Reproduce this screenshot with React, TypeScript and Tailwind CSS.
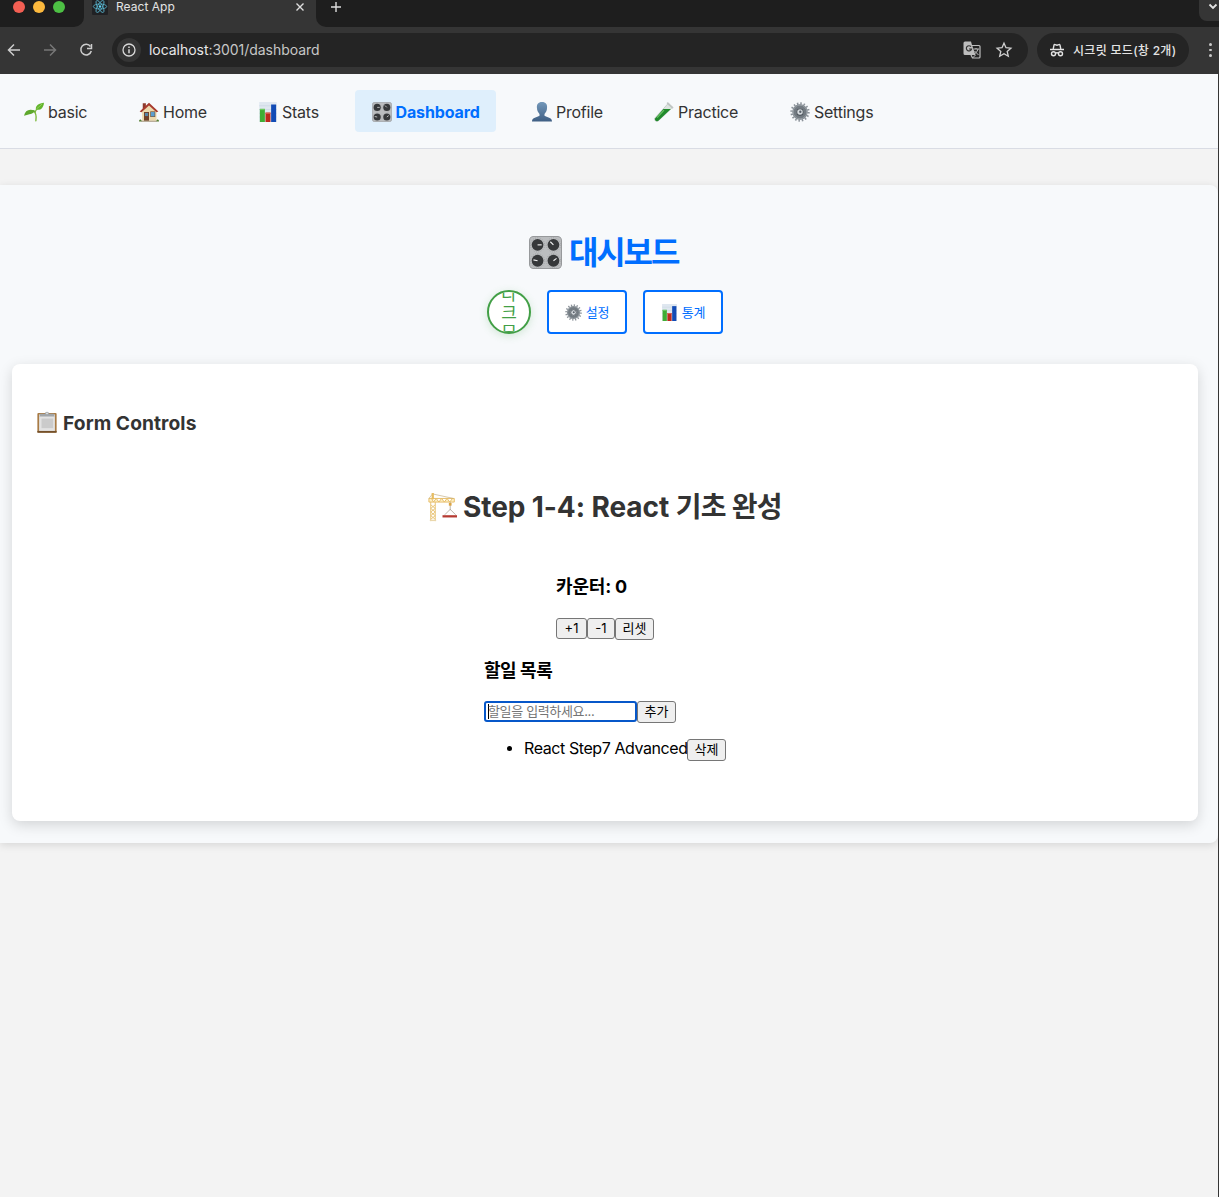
import type { ReactNode } from "react";

type IconProps = { className?: string };

const Seedling = ({ className }: IconProps) => (
  <svg viewBox="0 0 32 32" className={className}>
    <path d="M19 30C20 24 19 17 15 14" fill="none" stroke="#7bb83a" strokeWidth="2.2" strokeLinecap="round" />
    <path d="M18 17C18 13 20 11 25 8" fill="none" stroke="#7bb83a" strokeWidth="2" />
    <path d="M0 22C2 13 8 10 18 14C14 20 9 19 0 22Z" fill="#5ea82c" />
    <path d="M19 12C18 5 24 2 32 1C31 10 26 14 19 12Z" fill="#62b52c" />
    <path d="M20 11Q24 8 29 3" stroke="#a1d568" strokeWidth="1.2" fill="none" />
  </svg>
);

const House = ({ className }: IconProps) => (
  <svg viewBox="0 0 32 32" className={className}>
    <path d="M6 2h5v9H6z" fill="#8e3a2c" />
    <path d="M5 14L17 4L28 14V30H5Z" fill="#ecd9ad" />
    <path d="M1 15L16 1L31 15L28 16.500L16 5.500L4 16.500Z" fill="#a83a2d" />
    <path d="M8 16h8v14H8z" fill="#70402a" />
    <path d="M18 15h8v9h-8z" fill="#7a5434" />
    <path d="M19 16h6v7h-6z" fill="#5b9fd0" />
    <path d="M9.500 17.500h5v5h-5z" fill="#5785a8" />
    <path d="M0 31Q0 27 3 28L5 31H0zM32 31Q32 27 29 28L27 31z" fill="#557d31" />
    <path d="M4 30h24v1.500H4z" fill="#9c8c70" />
  </svg>
);

const BarChart = ({ className }: IconProps) => (
  <svg viewBox="0 0 32 32" className={className}>
    <path d="M2 0h28v32H2z" fill="#dfe7f0" />
    <path d="M2 6h28M2 12h28M2 18h28M2 24h28" stroke="#c9d5e2" strokeWidth="1" />
    <path d="M3 11h8v21H3z" fill="#3fae35" />
    <path d="M12 17h8v15h-8z" fill="#bd2a1d" />
    <path d="M21 4h8v28h-8z" fill="#124bb5" />
    <path d="M3 11h8v2H3z" fill="#6ccb60" />
    <path d="M12 17h8v2h-8z" fill="#dd6052" />
  </svg>
);

const knobs = [
  { x: 8.3, y: 8.6, dx: 4, dy: 0 },
  { x: 23.7, y: 8.6, dx: -3, dy: -3 },
  { x: 8.3, y: 24, dx: -4, dy: -0.8 },
  { x: 23.7, y: 24, dx: 3, dy: -2.3 },
];

const Knobs = ({ className }: IconProps) => (
  <svg viewBox="0 0 32 32" className={className}>
    <rect x="0.5" y="0.5" width="31" height="31" rx="4" fill="#bbbdbf" stroke="#97999b" />
    {knobs.map((k) => (
      <g key={`${k.x}-${k.y}`}>
        <circle cx={k.x} cy={k.y} r="6.900" fill="none" stroke="#929497" strokeWidth="0.700" strokeDasharray="0.8 1.500" />
        <circle cx={k.x} cy={k.y} r="5.700" fill="#36383a" />
        <path d={`M${k.x} ${k.y}l${k.dx} ${k.dy}`} stroke="#f2f2f2" strokeWidth="1.100" />
      </g>
    ))}
  </svg>
);

const Bust = ({ className }: IconProps) => (
  <svg viewBox="0 0 32 32" className={className}>
    <defs>
      <linearGradient id="bust" x1="0" y1="0" x2="0" y2="1">
        <stop offset="0" stopColor="#7398ba" />
        <stop offset="1" stopColor="#3f5f84" />
      </linearGradient>
    </defs>
    <path d="M16 0C10 0 7 4 8 10C8 14 10 17 12 19V22C8 25 0 24 0 31H32C32 24 24 25 20 22V19C22 17 24 14 24 10C25 4 22 0 16 0Z" fill="url(#bust)" />
  </svg>
);

const TestTube = ({ className }: IconProps) => (
  <svg viewBox="0 0 32 32" className={className}>
    <path d="M22 3L29 9L7 30C4 33 -1 29 2 25Z" fill="#dce5df" stroke="#a2aca6" strokeWidth="0.8" />
    <path d="M15 11L27 11L7 30C4 32 0 29 2 26Z" fill="#218a2c" />
    <path d="M16 13L5 25" stroke="#68c262" strokeWidth="2" />
    <path d="M22 2L29.500 9" stroke="#c1c6c4" strokeWidth="3" strokeLinecap="round" />
  </svg>
);

const Gear = ({ className }: IconProps) => (
  <svg viewBox="0 0 32 32" className={className}>
    <circle cx="16" cy="16" r="13.700" fill="none" stroke="#8b9299" strokeWidth="3.600" strokeDasharray="2.400 2.982" />
    <circle cx="16" cy="16" r="9" fill="none" stroke="#737b82" strokeWidth="6.500" />
    <circle cx="16" cy="16" r="11" fill="none" stroke="#a0a7ad" strokeWidth="1.300" />
    <circle cx="16" cy="16" r="5.300" fill="#d5dade" stroke="#4e565d" strokeWidth="1.800" />
    <circle cx="16.500" cy="15.500" r="1.900" fill="#59616a" />
  </svg>
);

const Clipboard = ({ className }: IconProps) => (
  <svg viewBox="0 0 32 32" className={className}>
    <rect x="2" y="3" width="28" height="28.500" rx="1.500" fill="#a87b45" />
    <path d="M2 29h28v2.500h-28z" fill="#73502b" />
    <path d="M4.500 5h23v24h-23z" fill="#e3e3e3" />
    <path d="M8 11h17v14H8z" fill="#cbcbcb" />
    <path d="M6 4h7c0-4 6-4 6 0h7l1 4H5z" fill="#a2a6a9" />
    <circle cx="16" cy="3.500" r="1.200" fill="#eee" />
  </svg>
);

const Crane = ({ className }: IconProps) => (
  <svg viewBox="0 0 32 32" className={className}>
    <path d="M3 9V31M8 9V31M3 13l5 4l-5 4l5 4l-5 4M8 13l-5 4l5 4l-5 4l5 4" stroke="#e9c67a" strokeWidth="1.100" fill="none" />
    <path d="M1 6h28v4H1zM4 6l2 4l3-4l3 4l3-4l3 4l3-4l3 4l3-4" stroke="#e7bf6c" strokeWidth="1.100" fill="#fff0c4" />
    <path d="M5 1L1 6M5 1L28 6" stroke="#bfa97b" strokeWidth="0.700" />
    <path d="M4 0h2.500v7H4z" fill="#e7bd62" />
    <path d="M24.500 10v9M24.500 18l-6 6M24.500 18l6 6" stroke="#a39a8b" strokeWidth="0.800" fill="none" />
    <path d="M23 11h3v3h-3z" fill="#dca443" />
    <path d="M16 24.500h16v2.500H16z" fill="#b53a32" />
    <path d="M2 29.500h7v1.500H2z" fill="#ead7ac" />
  </svg>
);

const ReactLogo = () => (
  <svg viewBox="0 0 16 16" className="size-4 shrink-0">
    <rect width="16" height="16" rx="1" fill="#202124" />
    <g fill="none" stroke="#59b7d1" strokeWidth="0.800">
      <ellipse cx="8" cy="7.500" rx="6.700" ry="2.500" />
      <ellipse cx="8" cy="7.500" rx="6.700" ry="2.500" transform="rotate(60 8 7.500)" />
      <ellipse cx="8" cy="7.500" rx="6.700" ry="2.500" transform="rotate(120 8 7.500)" />
    </g>
    <circle cx="8" cy="7.500" r="1.200" fill="#61dafb" />
  </svg>
);

function BrowserChrome() {
  return (
    <header className="h-[74px] bg-[#353535] text-[#e3e3e3]">
      <div className="flex h-[27px] bg-[#1e1e1e]">
        <div className="flex h-[27px] w-[84px] shrink-0 bg-[#353535]">
          <div className="flex w-full gap-2 rounded-br-[10px] bg-[#1e1e1e] pt-px pl-[13px]">
            <i className="size-3 rounded-full bg-[#f35f53]" />
            <i className="size-3 rounded-full bg-[#fcb93d]" />
            <i className="size-3 rounded-full bg-[#4dc044]" />
          </div>
        </div>
        <div className="flex h-[27px] w-[232px] shrink-0 bg-[#353535] pl-2">
          <div className="-mt-px"><ReactLogo /></div>
          <span className="ml-2 w-[178px] text-xs leading-[14px] tracking-[0.003em]">React App</span>
          <svg viewBox="0 0 12 12" className="mt-px size-3"><path d="M2.500 2.500l7 7m0-7l-7 7" stroke="#dedede" strokeWidth="1.400" /></svg>
        </div>
        <div className="flex h-[27px] flex-1 bg-[#353535]">
          <div className="flex w-full justify-between rounded-bl-[10px] bg-[#1e1e1e] pl-[14px]">
            <svg viewBox="0 0 12 12" className="mt-px size-3"><path d="M1 6h10M6 1v10" stroke="#dedede" strokeWidth="1.400" /></svg>
            <div className="h-[21px] w-5 rounded-bl-lg bg-[#353535] pt-[2px] pl-2">
              <svg viewBox="0 0 12 10" className="h-[10px] w-3"><path d="M2.500 2.500L6 6l3.500-3.500" fill="none" stroke="#e3e3e3" strokeWidth="1.800" /></svg>
            </div>
          </div>
        </div>
      </div>
      <div className="flex h-[46px] items-center">
        <svg viewBox="0 0 100 20" className="h-5 w-[100px] shrink-0" fill="none" strokeWidth="1.500">
          <path d="M20 10H9M14 4.500L8.500 10L14 15.500" stroke="#cdcdcd" />
          <path d="M44 10h11M50 4.500L55.500 10L50 15.500" stroke="#777" />
          <path d="M90.500 6.500A5.300 5.300 0 1 0 91.300 11" stroke="#cdcdcd" />
          <path d="M91.500 4v4.500H87" stroke="#cdcdcd" />
        </svg>
        <div className="ml-3 flex h-[34px] w-[916px] shrink-0 items-center rounded-full bg-[#242424] pl-[5px]">
          <div className="flex size-6 shrink-0 items-center justify-center rounded-full bg-[#353535]">
            <svg viewBox="0 0 14 14" className="size-[14px]"><circle cx="7" cy="7" r="6" fill="none" stroke="#d9d9d9" strokeWidth="1.300" /><path d="M7 6.200v4M7 3.500v1.400" stroke="#d9d9d9" strokeWidth="1.500" /></svg>
          </div>
          <span className="ml-2 w-[810px] shrink-0 text-sm tracking-[-0.003em] text-[#c7c7c7]"><span className="text-[#e8e8e8]">localhost</span>:3001/dashboard</span>
          <svg viewBox="0 0 18 18" className="ml-1 size-[18px] shrink-0">
            <path d="M8 4.500h8q1 0 1 1v10.500q0 1-1 1H9.500l-1.500-3" fill="none" stroke="#bdbdbd" strokeWidth="1.200" />
            <path d="M2 .500h6l1 3.500 3.500 10H2q-1.500 0-1.500-1.500V2q0-1.500 1.500-1.500z" fill="#bdbdbd" />
            <path d="M8 5.700A2.600 2.600 0 1 0 8.500 8H6" fill="none" stroke="#333" strokeWidth="1.200" />
            <path d="M10.500 8h5.500M13 7v1M15 8q-.5 3-3.500 5M11.500 10l4 4M9.500 17l3-3" fill="none" stroke="#bdbdbd" strokeWidth="1" />
          </svg>
          <svg viewBox="0 0 18 18" className="ml-[14px] size-[18px] shrink-0"><path d="M9 2.200l2 4.500 4.900.5-3.700 3.300 1.100 4.800L9 12.800l-4.300 2.500 1.100-4.800-3.700-3.300 4.900-.5z" fill="none" stroke="#d2d2d2" strokeWidth="1.300" /></svg>
        </div>
        <div className="ml-[9px] flex h-[34px] w-[152px] shrink-0 items-center rounded-full bg-[#242424] pl-3">
          <svg viewBox="0 0 16 16" className="size-4 shrink-0" fill="none" stroke="#e3e3e3" strokeWidth="1.400">
            <path d="M1 7.500h14" strokeWidth="1.500" />
            <path d="M4.200 7L5 3.200q.2-.8 1-.6l2 .6 2-.6q.8-.2 1 .6L11.800 7" />
            <circle cx="4.500" cy="11.700" r="2" /><circle cx="11.500" cy="11.700" r="2" /><path d="M6.500 11.200q1.500-.8 3 0" />
          </svg>
          <span className="mt-px ml-2 text-xs font-medium tracking-[0.024em] whitespace-nowrap">시크릿 모드(창 2개)</span>
        </div>
        <div className="ml-5 flex flex-col gap-[3px]">
          <i className="size-[2.500px] rounded-full bg-[#c8c8c8]" />
          <i className="size-[2.500px] rounded-full bg-[#c8c8c8]" />
          <i className="size-[2.500px] rounded-full bg-[#c8c8c8]" />
        </div>
      </div>
    </header>
  );
}

const navItems = [
  { Icon: Seedling, label: "basic", width: "w-[95px]", active: false },
  { Icon: House, label: "Home", width: "w-[99px]", active: false },
  { Icon: BarChart, label: "Stats", width: "w-[93px]", active: false },
  { Icon: Knobs, label: "Dashboard", width: "w-[141px]", active: true },
  { Icon: Bust, label: "Profile", width: "w-[102px]", active: false },
  { Icon: TestTube, label: "Practice", width: "w-[116px]", active: false },
  { Icon: Gear, label: "Settings", width: "w-[116px]", active: false },
];

function NavBar() {
  return (
    <nav className="flex h-[75px] gap-5 border-b border-[#d9dce4] bg-[#f7f9fb] pt-4 pl-2">
      {navItems.map(({ Icon, label, width, active }) => (
        <a key={label} className={`flex h-[42px] items-center rounded pt-[2px] pl-4 ${width} ${active ? "bg-[#dfeffc] font-bold tracking-[-0.008em] text-[#006eff]" : "tracking-[-0.015em] text-[#333]"}`}>
          <Icon className={`size-5 shrink-0 ${active ? "ml-px" : ""}`} />
          <span className={`whitespace-nowrap ${active ? "ml-[3.500px]" : "ml-1"}`}>{label}</span>
        </a>
      ))}
    </nav>
  );
}

function NativeButton({ children, size }: { children: ReactNode; size: string }) {
  return <button className={`flex shrink-0 items-center justify-center rounded-[3px] border border-[#767676] bg-[#efefef] pb-px text-[13px] leading-none whitespace-nowrap text-black ${size}`}>{children}</button>;
}

function FormCard() {
  return (
    <section className="mt-[30px] ml-3 h-[457px] w-[1186px] rounded-lg bg-white pt-[46px] shadow-[0_4px_14px_rgba(0,0,0,0.15)]">
      <h2 className="flex h-[26px] items-center pl-6 text-[19.200px] font-bold tracking-[0.004em] whitespace-nowrap text-[#333]">
        <Clipboard className="-mt-[2px] mr-[5px] size-[22px]" />Form Controls
      </h2>
      <h1 className="mt-[50px] flex h-[42px] items-center pl-[416px] text-[28px] font-bold whitespace-nowrap text-[#333]">
        <Crane className="mr-[6px] size-[29px] shrink-0" />
        <span className="tracking-[-0.003em]">Step 1-4: React&nbsp;</span><span className="tracking-[-0.024em]">기초 완성</span>
      </h1>
      <h3 className="mt-[45px] ml-[544px] h-7 text-[18px] leading-7 font-bold tracking-[-0.010em]">카운터: 0</h3>
      <div className="mt-[17px] ml-[544px] flex h-[22px] items-start">
        <NativeButton size="h-[21px] w-[31px]">+1</NativeButton>
        <NativeButton size="h-[21px] w-[28px]">-1</NativeButton>
        <NativeButton size="h-[22px] w-[39px]">리셋</NativeButton>
      </div>
      <h3 className="mt-[17px] ml-[472px] h-7 text-[18px] leading-7 font-bold tracking-[-0.025em]">할일 목록</h3>
      <div className="mt-4 ml-[472px] flex h-[22px] items-start">
        <div className="flex h-[21px] w-[153px] items-center rounded-[3px] border-2 border-[#0657c9] pl-[2px]">
          <i className="h-[15px] w-px bg-black" />
          <input placeholder="할일을 입력하세요..." className="-mt-[2px] -ml-px h-4 w-[140px] text-[13px] leading-4 tracking-[-0.027em] text-black outline-none placeholder:text-[#757575]" />
        </div>
        <NativeButton size="h-[22px] w-[39px]">추가</NativeButton>
      </div>
      <ul className="mt-4 ml-[472px]">
        <li className="flex h-[22px] items-center">
          <i className="-mt-[3px] ml-[23px] size-[5px] shrink-0 rounded-full bg-black" />
          <span className="-mt-[5px] ml-3 w-[163px] shrink-0 tracking-[-0.026em] whitespace-nowrap">React Step7 Advanced</span>
          <NativeButton size="h-[22px] w-[39px]">삭제</NativeButton>
        </li>
      </ul>
    </section>
  );
}

export default function App() {
  return (
    <div className="h-[1197px] w-[1219px] overflow-hidden bg-[#353535] font-[Inter,'Noto_Sans_CJK_KR',sans-serif] text-base text-black">
      <BrowserChrome />
      <main className="h-[1123px] w-[1218px] overflow-hidden bg-[#f3f3f3]">
        <NavBar />
        <section className="mt-9 h-[658px] rounded-r-lg bg-[#f7f9fb] pt-[43px] shadow-[0_2px_8px_rgba(0,0,0,0.12)]">
          <h1 className="flex h-12 items-center pl-[529px] text-[32px] leading-[48px] font-bold text-[#006eff]">
            <Knobs className="mr-[7px] size-[33px] shrink-0" /><span className="mt-[2px] tracking-[-0.067em] whitespace-nowrap">대시보드</span>
          </h1>
          <div className="mt-[14px] flex h-11 gap-4 pl-[487px]">
            <button className="flex size-11 flex-col items-center justify-center overflow-hidden rounded-full border-2 border-[#429f46] bg-white pt-[3px] text-[17px] leading-[19px] text-[#429f46] shadow-[0_2px_8px_rgba(67,160,71,0.2)]">
              <span>다</span><span>크</span><span>모</span>
            </button>
            <button className="flex w-20 items-center justify-center rounded border-2 border-[#006eff] bg-white text-[13px] tracking-[-0.02em] text-[#006eff]"><Gear className="mr-1 size-[17px]" /><span className="mt-[2px]">설정</span></button>
            <button className="flex w-20 items-center justify-center rounded border-2 border-[#006eff] bg-white text-[13px] tracking-[-0.02em] text-[#006eff]"><BarChart className="mr-1 size-[17px]" /><span className="mt-[2px]">통계</span></button>
          </div>
          <FormCard />
        </section>
      </main>
    </div>
  );
}
